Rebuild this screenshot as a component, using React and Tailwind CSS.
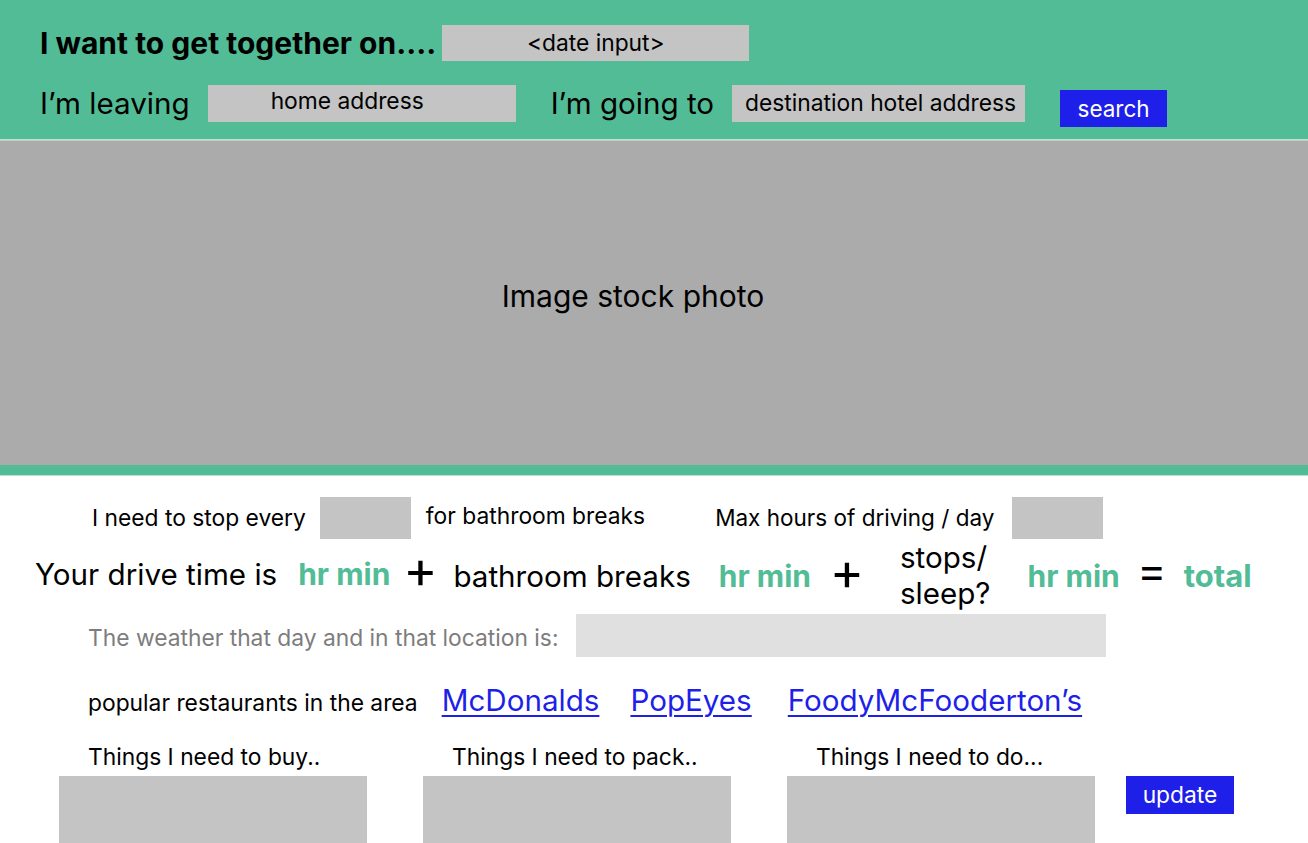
import React from "react";

const font = { fontFamily: "Inter, 'Noto Sans', sans-serif" };

function HrMin({ className = "" }) {
  return <span className={"text-[30px] font-bold text-[#52BC96] whitespace-nowrap " + className}>hr min</span>;
}

function Op({ children, className = "" }) {
  return (
    <span className={"w-[24px] flex justify-center leading-none text-black " + className}>
      {children}
    </span>
  );
}

function ListCol({ label }) {
  return (
    <div className="w-[308px] flex flex-col">
      <div className="pl-[29px] text-[22.8px] leading-[24px] text-black whitespace-nowrap">{label}</div>
      <div className="mt-[7px] h-[80px] bg-[#C4C4C4]" />
    </div>
  );
}

export default function App() {
  return (
    <div className="w-[1308px] h-[843px] overflow-hidden bg-white" style={font}>
      {/* header */}
      <div className="h-[139px] bg-[#52BC96] pl-[40px] pt-[25px]">
        <div className="flex items-center h-[36px]">
          <span className="text-[30px] font-bold text-black whitespace-nowrap">I want to get together on....</span>
          <div className="ml-[6px] w-[307px] h-[36px] bg-[#C4C4C4] flex items-center justify-center text-[22.8px] text-black">
            &lt;date input&gt;
          </div>
        </div>
        <div className="flex items-start mt-[24px]">
          <span className="text-[29.6px] leading-[37px] text-black whitespace-nowrap">I’m leaving</span>
          <div className="ml-[18px] w-[308px] h-[37px] bg-[#C4C4C4] flex items-center pl-[63px] pb-[5px] text-[22.8px] text-black">
            home address
          </div>
          <span className="ml-[35px] text-[29.6px] leading-[37px] text-black whitespace-nowrap">I’m going to</span>
          <div className="ml-[18px] w-[293px] h-[37px] bg-[#C4C4C4] flex items-center pl-[13px] text-[22.8px] text-black whitespace-nowrap">
            destination hotel address
          </div>
          <div className="ml-[35px] mt-[5px] w-[107px] h-[37px] bg-[#1F1FEA] flex items-center justify-center text-[22.5px] text-white">
            search
          </div>
        </div>
      </div>
      <div className="h-[1px] bg-[#B9E3D2]" />
      <div className="h-[1px] bg-[#C8C8C8]" />
      {/* photo */}
      <div className="h-[324px] bg-[#ABABAB] flex items-center justify-center pr-[42px] pb-[14px] text-[30px] text-black">
        Image stock photo
      </div>
      <div className="h-[10px] bg-[#52BC96]" />
      <div className="h-[1px] bg-[#B9E3D2]" />

      {/* controls */}
      <div className="flex items-center mt-[21px] h-[42px] pl-[92px] text-[22.8px] text-black whitespace-nowrap">
        <span>I need to stop every</span>
        <div className="ml-[14px] w-[91px] h-[42px] bg-[#C4C4C4]" />
        <span className="ml-[15px] -mt-[4px]">for bathroom breaks</span>
        <span className="ml-[70px] text-[22.5px]">Max hours of driving / day</span>
        <div className="ml-[18px] w-[91px] h-[42px] bg-[#C4C4C4]" />
      </div>

      <div className="flex items-center h-[72px] pl-[35px] text-black whitespace-nowrap">
        <span className="text-[29.6px] -mt-[2px]">Your drive time is</span>
        <HrMin className="ml-[21px] -mt-[2px]" />
        <Op className="ml-[18px] -mt-[10px] text-[52px]">+</Op>
        <span className="ml-[21px] text-[29.6px] mt-[2px]">bathroom breaks</span>
        <HrMin className="ml-[28px] mt-[2px]" />
        <Op className="ml-[24px] -mt-[6px] text-[52px]">+</Op>
        <span className="ml-[41px] text-[29.6px] leading-[36px]">stops/<br />sleep?</span>
        <HrMin className="ml-[37px] mt-[2px]" />
        <Op className="ml-[20px] -mt-[10px] text-[44px]">=</Op>
        <span className="ml-[20px] text-[31px] font-bold text-[#52BC96] mt-[2px]">total</span>
      </div>

      <div className="flex items-center mt-[3px] h-[43px] pl-[88px] text-[22.8px] whitespace-nowrap">
        <span className="text-[#7D7D7D] mt-[6px]">The weather that day and in that location is:</span>
        <div className="ml-[18px] w-[530px] h-[43px] bg-[#E0E0E0]" />
      </div>

      <div className="flex items-center mt-[23px] h-[40px] pl-[88px] text-black whitespace-nowrap">
        <span className="text-[22.8px] mt-[6px]">popular restaurants in the area</span>
        <a className="ml-[24px] text-[29.6px] text-[#1F1FEA] underline underline-offset-[4px] decoration-[2px]">McDonalds</a>
        <a className="ml-[31px] text-[29.6px] text-[#1F1FEA] underline underline-offset-[4px] decoration-[2px]">PopEyes</a>
        <a className="ml-[36px] text-[29.6px] text-[#1F1FEA] underline underline-offset-[4px] decoration-[2px]">FoodyMcFooderton’s</a>
      </div>

      <div className="flex mt-[25px] pl-[59px] gap-[56px]">
        <ListCol label="Things I need to buy.." />
        <ListCol label="Things I need to pack.." />
        <ListCol label="Things I need to do..." />
        <div className="-ml-[25px] mt-[31px] w-[108px] h-[38px] bg-[#1F1FEA] flex items-center justify-center text-[22.8px] text-white">
          update
        </div>
      </div>
    </div>
  );
}
